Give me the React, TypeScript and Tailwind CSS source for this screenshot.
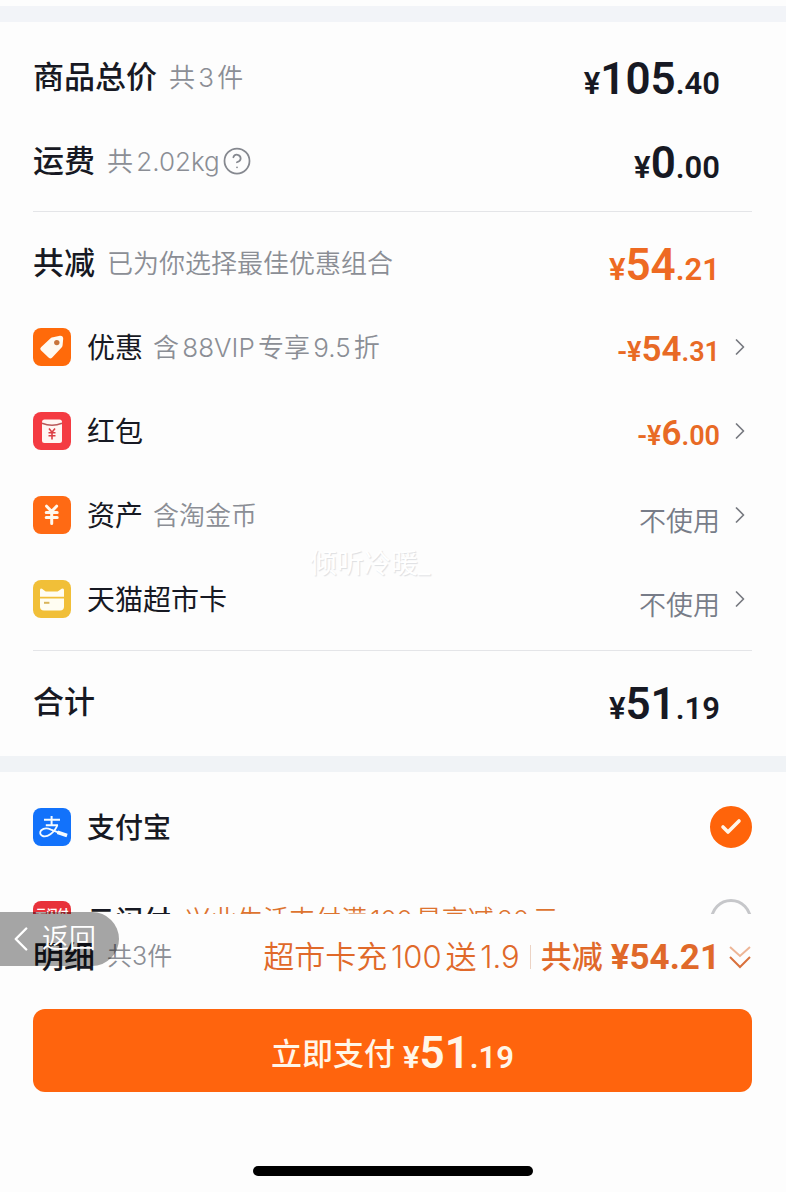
import { useState, type ReactNode } from 'react';
import { Check, ChevronLeft, ChevronRight, CircleHelp } from 'lucide-react';
import clsx from 'clsx';

type PriceProps = {
  value: string;
  size?: 'sm' | 'lg';
  minus?: boolean;
};

function Price({ value, size = 'lg', minus }: PriceProps) {
  const [whole, cents] = value.split('.');

  return (
    <span
      className={clsx(
        "font-[Roboto,'Liberation_Sans',sans-serif] font-semibold leading-none whitespace-nowrap",
        size === 'lg' ? 'text-[31px]' : 'text-[27px]'
      )}
    >
      {minus && '-'}¥
      <span className={size === 'lg' ? 'text-[44px]' : 'text-[35px]'}>
        {whole}
      </span>
      .{cents}
    </span>
  );
}

function TagIcon() {
  return (
    <svg viewBox="0 0 38 38" className="size-[38px] shrink-0" aria-hidden="true">
      <rect width="38" height="38" rx="8" fill="#ff6a0a" />
      <path
        d="M20 9.2 27 7.8Q30.2 7.6 30.2 10.8L29.6 17.2Q29.5 18.4 28.6 19.4L19 29.7Q17.4 31.2 15.8 29.7L7.9 22.3Q6.4 20.7 8 19.2L17.6 10.3Q18.6 9.4 20 9.2Z"
        fill="#fffaf0"
      />
      <circle cx="23.8" cy="14.6" r="2.7" fill="#c8753a" />
    </svg>
  );
}

function RedPacketIcon() {
  return (
    <svg viewBox="0 0 38 38" className="size-[38px] shrink-0" aria-hidden="true">
      <rect width="38" height="38" rx="8" fill="#f43b42" />
      <rect x="9" y="7.5" width="20" height="23.5" rx="2.5" fill="#fff6f4" />
      <path d="M9 11.2Q19 15.4 29 11.2" stroke="#b9585a" strokeWidth="1.5" fill="none" />
      <path
        d="M16 16.5 19 20.2 22 16.5M15.5 20.8H22.5M15.5 23.8H22.5M19 20.2V27.5"
        stroke="#dc3f45"
        strokeWidth="1.6"
        fill="none"
      />
    </svg>
  );
}

function AssetIcon() {
  return (
    <svg viewBox="0 0 38 38" className="size-[38px] shrink-0" aria-hidden="true">
      <rect width="38" height="38" rx="8" fill="#ff6a14" />
      <path
        d="M13.6 10.2 18.6 15.4 23.6 10.2M13.2 16.4H24.2M13.2 21.4H24.2M18.7 16V27.6"
        stroke="#fff8ee"
        strokeWidth="3"
        strokeLinecap="round"
        strokeLinejoin="round"
        fill="none"
      />
    </svg>
  );
}

function CardIcon() {
  return (
    <svg viewBox="0 0 38 38" className="size-[38px] shrink-0" aria-hidden="true">
      <rect width="38" height="38" rx="8" fill="#f1bf38" />
      <path
        d="M7 16.8V10.2Q7 7.8 9 8.8L12 11Q12.6 11.5 13.6 11.5H23.6Q24.6 11.5 25.4 11L28.6 8.8Q31 7.6 31 10.2V16.8Z"
        fill="#fffdf2"
      />
      <path d="M7 18.4H31V26.4Q31 30.4 27 30.4H11Q7 30.4 7 26.4Z" fill="#fffdf2" />
      <path d="M11 22.8H16.4" stroke="#d9b45a" strokeWidth="2" />
    </svg>
  );
}

function AlipayIcon() {
  return (
    <svg viewBox="0 0 38 38" className="size-[38px] shrink-0" aria-hidden="true">
      <rect width="38" height="38" rx="8" fill="#1272fb" />
      <g stroke="#f4fbff" fill="none">
        <path d="M18.6 8V17.4M11 11.8H27M12.8 17.2H25" strokeWidth="2" />
        <path
          d="M24.4 17Q22.4 22.6 17.4 26.2Q12.6 29.6 8.9 27.6Q5.8 25.2 8.3 22.2Q12 19 18 21.6Q26 24.8 34 27.6"
          strokeWidth="1.8"
        />
        <path d="M24.4 24.3 34 27.5" strokeWidth="3.6" />
      </g>
    </svg>
  );
}

function QuickPassIcon() {
  return (
    <span className="flex size-[38px] shrink-0 justify-center rounded-lg bg-[#e8323a] pt-1.5 text-[11px] leading-[14px] font-bold whitespace-nowrap text-white">
      云闪付
    </span>
  );
}

const discounts = [
  {
    title: '优惠',
    hint: '含88VIP专享9.5折',
    icon: <TagIcon />,
    amount: '54.31',
  },
  {
    title: '红包',
    icon: <RedPacketIcon />,
    amount: '6.00',
  },
  {
    title: '资产',
    hint: '含淘金币',
    icon: <AssetIcon />,
  },
  {
    title: '天猫超市卡',
    icon: <CardIcon />,
  },
];

const methods = [
  { id: 'alipay', title: '支付宝', icon: <AlipayIcon /> },
  {
    id: 'quickpass',
    title: '云闪付',
    icon: <QuickPassIcon />,
    promo: '兴业生活支付满100最高减20元',
  },
];

function Hint({ children }: { children: ReactNode }) {
  return (
    <span className="text-[26px] font-[350] text-[#8b8e95] [text-autospace:normal]">
      {children}
    </span>
  );
}

type SummaryRowProps = {
  title: string;
  hint?: string;
  value: string;
  help?: boolean;
  accent?: boolean;
};

function SummaryRow({ title, hint, value, help, accent }: SummaryRowProps) {
  return (
    <div className="flex h-[84px] items-center">
      <h2 className="mr-3 text-[31px] font-medium">{title}</h2>
      {hint && <Hint>{hint}</Hint>}
      {help && (
        <button type="button" aria-label="运费说明" className="ml-0.5">
          <CircleHelp size={30} strokeWidth={1.4} className="text-[#85888f]" />
        </button>
      )}
      <div className={clsx('mr-8 ml-auto pt-1', accent && 'text-[#ee6a22]')}>
        <Price value={value} />
      </div>
    </div>
  );
}

export default function App() {
  const [method, setMethod] = useState('alipay');

  return (
    <div className="relative flex h-screen flex-col bg-[#fdfdfd] font-[Inter,'Noto_Sans_CJK_SC',sans-serif] text-[#171923]">
      <main className="min-h-0 flex-1 overflow-y-auto pt-1.5 [scrollbar-width:none]">
        <div className="h-4 bg-[#f2f4f8]" />

        <section className="pr-[34px] pl-[33px]">
          <div className="border-b border-[#e4e5e8] pt-[13px] pb-2">
            <SummaryRow title="商品总价" hint="共3件" value="105.40" />
            <SummaryRow title="运费" hint="共2.02kg" value="0.00" help />
          </div>

          <div className="border-b border-[#e4e5e8] py-[9px]">
            <SummaryRow
              title="共减"
              hint="已为你选择最佳优惠组合"
              value="54.21"
              accent
            />
            {discounts.map((item) => (
              <button
                key={item.title}
                type="button"
                className="flex h-[84px] w-full items-center text-left"
              >
                {item.icon}
                <span className="mr-2.5 ml-4 pt-0.5 text-[28px]">{item.title}</span>
                {item.hint && <Hint>{item.hint}</Hint>}
                {item.amount ? (
                  <span className="ml-auto pt-1 text-[#e86a25]">
                    <Price value={item.amount} size="sm" minus />
                  </span>
                ) : (
                  <span className="ml-auto pt-3.5 text-[27px] font-[350] text-[#777c88]">
                    不使用
                  </span>
                )}
                <ChevronRight
                  size={28}
                  strokeWidth={1.5}
                  className="ml-1.5 -mr-0.5 text-[#777a80]"
                />
              </button>
            ))}
          </div>

          <div className="pt-[9px] pb-3">
            <SummaryRow title="合计" value="51.19" />
          </div>
        </section>

        <div className="h-4 bg-[#f0f3f6]" />

        <section className="pt-2 pr-[34px] pl-[33px]">
          {methods.map((item) => (
            <label key={item.id} className="flex h-[93px] items-center">
              {item.icon}
              <span className="ml-4 pt-0.5 text-[28px] font-medium">
                {item.title}
              </span>
              {item.promo && (
                <span className="ml-3.5 text-[26px] font-[350] text-[#dd7430] [text-autospace:normal]">
                  {item.promo}
                </span>
              )}
              <span className="relative ml-auto size-[42px]">
                <input
                  type="radio"
                  name="method"
                  value={item.id}
                  checked={method === item.id}
                  onChange={() => setMethod(item.id)}
                  className="block size-full appearance-none rounded-full border-[3px] border-[#c6c7ca] checked:border-[#ff640a] checked:bg-[#ff640a]"
                />
                {method === item.id && (
                  <Check
                    size={24}
                    strokeWidth={3.6}
                    className="pointer-events-none absolute inset-0 m-auto text-[#fff6ea]"
                  />
                )}
              </span>
            </label>
          ))}
        </section>
      </main>

      <footer className="relative bg-[#fdfdfd] pr-[34px] pl-[33px]">
        <div className="flex h-[86px] items-center">
          <h2 className="mr-3 text-[31px] font-medium">明细</h2>
          <span className="text-[25px] font-[350] text-[#8b8e95]">共3件</span>
          <button
            type="button"
            className="ml-auto flex items-center text-[#e0692a]"
          >
            <span className="text-[31px] font-[350] [text-autospace:normal]">
              超市卡充100送1.9
            </span>
            <span className="mx-2.5 h-6 w-px bg-[#ecd3c4]" />
            <span className="text-[31px] font-medium">共减</span>
            <span className="ml-2 font-[Roboto,'Liberation_Sans',sans-serif] text-[35px] leading-none font-bold">
              ¥54.21
            </span>
            <svg
              viewBox="0 0 24 26"
              className="ml-2 h-[26px] w-6"
              fill="none"
              strokeWidth="2"
              aria-hidden="true"
            >
              <path d="M2 3 12 12 22 3" stroke="#edb596" />
              <path d="M2 13 12 23 22 13" stroke="#d9713c" />
            </svg>
          </button>
        </div>

        <button
          type="button"
          className="mt-[9px] flex h-[83px] w-full items-center justify-center rounded-xl bg-[#ff640d] pt-1 text-[#fff6e8]"
        >
          <span className="mr-2 pt-1 text-[31px] font-medium">立即支付</span>
          <Price value="51.19" />
        </button>

        <div className="mx-auto mt-[74px] mb-4 h-2.5 w-[280px] rounded-full bg-black" />

        <button
          type="button"
          className="absolute -top-0.5 left-0 flex h-[54px] w-[119px] items-center rounded-r-full bg-black/35 text-white"
        >
          <ChevronLeft size={42} strokeWidth={1.4} />
          <span className="text-[27px] font-[350]">返回</span>
        </button>
      </footer>

      <p className="pointer-events-none absolute top-[544px] left-[310px] text-[27px] text-white [text-shadow:1px_1px_1px_#dddfe2]">
        倾听冷暖_
      </p>
    </div>
  );
}
